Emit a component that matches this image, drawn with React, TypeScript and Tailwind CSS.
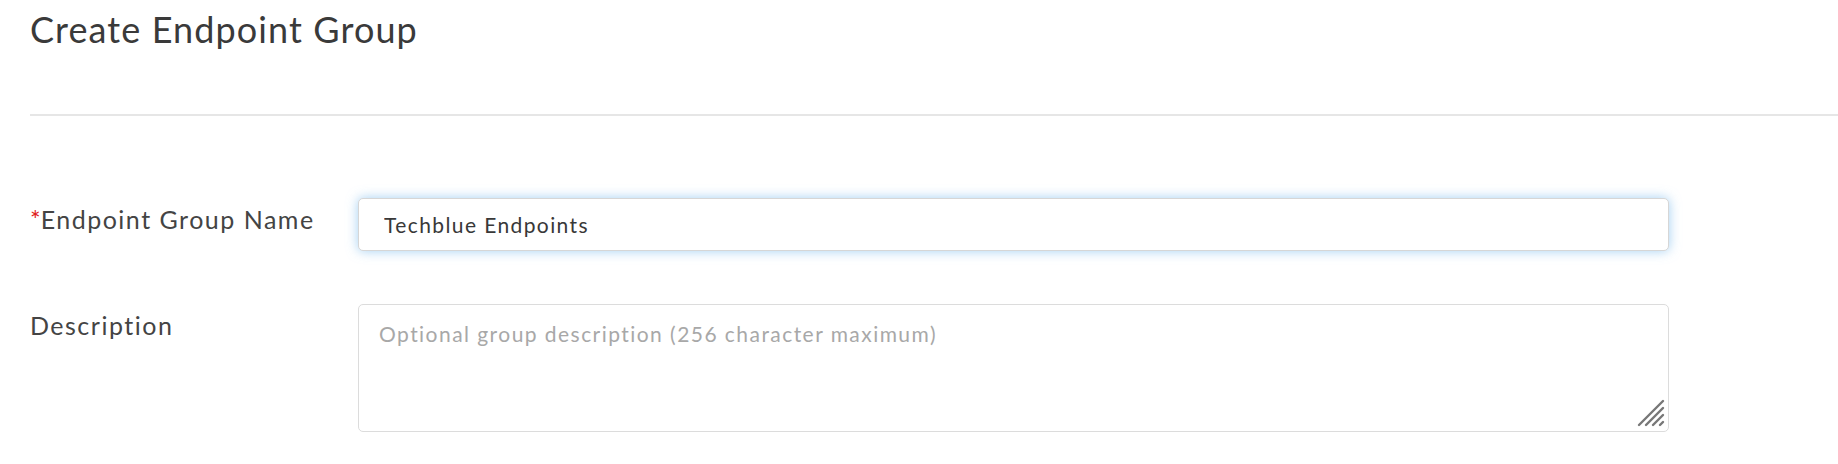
import React from "react";

export default function App() {
  return (
    <div className="w-[1838px] h-[464px] bg-white overflow-hidden" style={{ fontFamily: "Lato, 'Open Sans', sans-serif" }}>
      <div className="pl-[30px]">
        <h1 className="pt-[7px] text-[36px] leading-[44px] tracking-[1.1px] text-[#3a3a3a] font-normal">Create Endpoint Group</h1>
        <div className="mt-[63px] h-[2px] bg-[#e6e6e6]" />
        <div className="mt-[82px] flex flex-col gap-[53px]">
          <div className="flex items-start">
            <label className="w-[328px] shrink-0 pt-[8px] text-[25px] leading-[26px] tracking-[1.5px] text-[#444]">
              <span className="text-[#e0201c] tracking-normal">*</span>Endpoint Group Name
            </label>
            <input
              defaultValue="Techblue Endpoints"
              className="w-[1311px] h-[53px] rounded-[5px] border border-[#d6d6d6] bg-white pl-[25px] pr-4 text-[21px] tracking-[1.4px] text-[#383838] outline-none shadow-[0_0_12px_rgba(102,175,233,0.6)]"
              style={{ fontFamily: "Lato, sans-serif" }}
            />
          </div>
          <div className="flex items-start">
            <label className="w-[328px] shrink-0 pt-[8px] text-[25px] leading-[26px] tracking-[1.5px] text-[#444]">Description</label>
            <div className="relative">
              <textarea
                placeholder="Optional group description (256 character maximum)"
                className="block w-[1311px] h-[128px] resize-none rounded-[5px] border border-[#dcdcdc] bg-white pl-[20px] pt-[17px] text-[21px] leading-[24px] tracking-[1.45px] text-[#333] placeholder:text-[#a8a8a8] outline-none"
                style={{ fontFamily: "Lato, sans-serif" }}
              />
              <svg className="absolute right-[3px] bottom-[4px]" width="30" height="30" viewBox="0 0 30 30">
                <g stroke="#777" strokeWidth="2.4" strokeLinecap="round">
                  <line x1="3" y1="27" x2="27" y2="3" />
                  <line x1="10" y1="27" x2="27" y2="10" />
                  <line x1="17" y1="27" x2="27" y2="17" />
                  <line x1="24" y1="27" x2="27" y2="24" />
                </g>
              </svg>
            </div>
          </div>
        </div>
      </div>
    </div>
  );
}
